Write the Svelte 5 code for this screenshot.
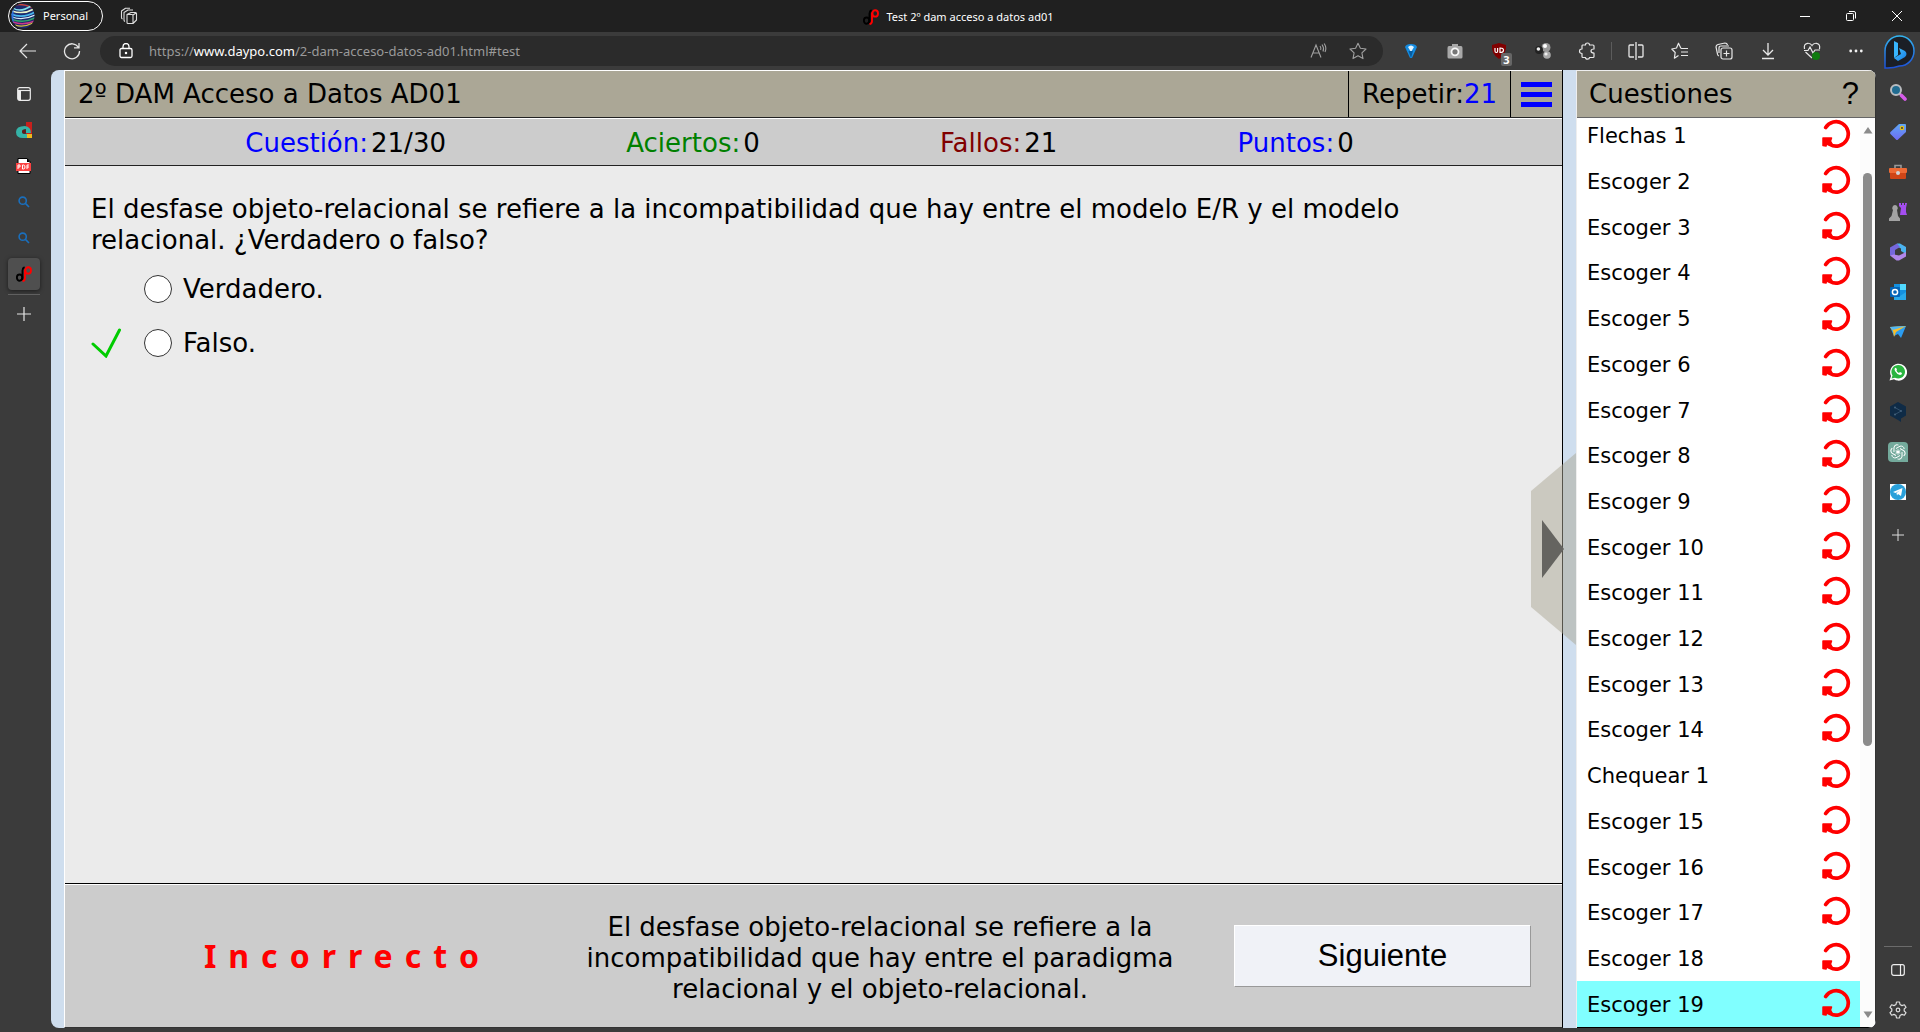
<script>
  const questions = [
    'Flechas 1',
    ...Array.from({ length: 13 }, (_, i) => `Escoger ${i + 2}`),
    'Chequear 1',
    ...Array.from({ length: 5 }, (_, i) => `Escoger ${i + 15}`)
  ];
  const stats = [
    { label: 'Cuestión:', value: '21/30', tone: 'blue' },
    { label: 'Aciertos:', value: '0', tone: 'green' },
    { label: 'Fallos:', value: '21', tone: 'maroon' },
    { label: 'Puntos:', value: '0', tone: 'blue' }
  ];
</script>

{#snippet daypo()}
  <svg width="16" height="16" viewBox="0 0 16 16" fill="none" stroke-width="1.9">
    <ellipse cx="3.600" cy="11.600" rx="2.700" ry="3.100" stroke="#000" />
    <path d="M6.500 14.500V4.500Q6.600 2 8.600 1.200" stroke="#000" />
    <ellipse cx="12.200" cy="4.400" rx="2.800" ry="3.200" stroke="#f00" />
    <path d="M9 3.500V12Q9 14.600 6.500 15.200" stroke="#f00" />
  </svg>
{/snippet}

{#snippet lens()}
  <svg width="12" height="12" viewBox="0 0 12 12" fill="none" stroke="#1a6fbd" stroke-width="1.6"><circle cx="4.7" cy="4.7" r="3.6" /><path d="M7.4 7.4L11 11" /></svg>
{/snippet}

<div class="browser">
  <header class="titlebar">
    <button class="profile">
      <svg width="24" height="26" viewBox="0 0 24 26">
        <defs><clipPath id="face"><ellipse cx="12" cy="13" rx="11.5" ry="12.500" /></clipPath></defs>
        <g clip-path="url(#face)" fill="none">
          <rect width="24" height="26" fill="#1c2a6c" />
          <path d="M3 2Q12 0 22 5" stroke="#c8453a" stroke-width="1.500" />
          <path d="M2 5Q9 10 20 3" stroke="#7fe0e8" stroke-width="1.500" />
          <path d="M1 8Q12 12 23 6" stroke="#e9f3c9" stroke-width="1.500" />
          <path d="M0 11Q12 16 24 9" stroke="#49b8ee" stroke-width="1.800" />
          <path d="M1 14Q12 18 24 12" stroke="#d9eefa" stroke-width="1.300" />
          <path d="M0 16Q12 21 24 15" stroke="#2fa46b" stroke-width="1.500" />
          <path d="M2 19Q12 23 24 18" stroke="#c9378a" stroke-width="1.500" />
          <path d="M4 22Q12 25 22 20" stroke="#d8c13c" stroke-width="1.300" />
          <path d="M1 4V20" stroke="#2f73e0" stroke-width="3" />
        </g>
      </svg>
      <span>Personal</span>
    </button>
    <button class="icon" aria-label="Espacios de trabajo">
      <svg width="18" height="18" viewBox="0 0 18 18" fill="none" stroke="#ddd" stroke-width="1.1" stroke-linejoin="round"><path d="M7 7.5L11 5.5H15.5Q16.500 5.500 16.500 6.500V13L13 16.500H8Q7 16.500 7 15.500ZM7 7.500H12Q13 7.500 13 8.500V16M13 8L16 6" /><path d="M5 14.500Q4 14 4 13V5.500L8 3H13M2.500 12Q1.500 11.500 1.500 10.500V4L5.500 1.200H10" /></svg>
    </button>
    <h1 class="tab-title">{@render daypo()}<span>Test 2º dam acceso a datos ad01</span></h1>
    <div class="window-buttons">
      <button aria-label="Minimizar"><svg width="10" height="10" viewBox="0 0 10 10" stroke="#fff"><path d="M0 5.500H10" /></svg></button>
      <button aria-label="Restaurar"><svg width="10" height="10" viewBox="0 0 10 10" stroke="#fff" fill="none"><rect x=".5" y="2.500" width="7" height="7" rx="1" /><path d="M3 .500H8Q9.500 .500 9.500 2V7.500" /></svg></button>
      <button aria-label="Cerrar"><svg width="10" height="10" viewBox="0 0 10 10" stroke="#fff"><path d="M0 0L10 10M10 0L0 10" /></svg></button>
    </div>
  </header>

  <nav class="toolbar" aria-label="Navegación">
    <button class="slot" aria-label="Atrás"><svg width="18" height="16" viewBox="0 0 18 16" fill="none" stroke="#e6e6e6" stroke-width="1.2"><path d="M8 1L1 8L8 15M1 8H17" /></svg></button>
    <button class="slot" aria-label="Actualizar"><svg width="18" height="18" viewBox="0 0 18 18" fill="none" stroke="#e6e6e6" stroke-width="1.3"><path d="M15.500 5.500A7.500 7.500 0 1 0 16.500 9M16 1V5.800H11" /></svg></button>
    <div class="address">
      <svg width="14" height="16" viewBox="0 0 14 16" fill="none" stroke="#fff" stroke-width="1.3"><rect x="1" y="5.500" width="12" height="9" rx="1.500" /><path d="M4 5.500V3.500A3 3 0 0 1 10 3.500V5.500" /><circle cx="7" cy="10" r=".6" fill="#fff" /></svg>
      <a href="#test">https://<b>www.daypo.com</b>/2-dam-acceso-datos-ad01.html#test</a>
      <button class="slot aside" aria-label="Leer en voz alta"><svg width="18" height="16" viewBox="0 0 18 16" fill="none" stroke="#a0a0a0" stroke-width="1.1"><path d="M1 14.500L6 2L11 14.500M3 10H9M10 3Q11.500 5 10.600 7M12 1.500Q14.500 5 13 8.500M14.200 .500Q17 5 15 9" /></svg></button>
      <button class="slot" aria-label="Favorito"><svg width="18" height="18" viewBox="0 0 18 18" fill="none" stroke="#a0a0a0" stroke-width="1.1" stroke-linejoin="round"><path d="M9 1.200L11.400 6.300L17 7L12.900 10.900L14 16.600L9 13.800L4 16.600L5.100 10.900L1 7L6.600 6.300Z" /></svg></button>
    </div>
    <div class="extensions">
      <button class="slot" aria-label="Gema"><svg width="14" height="16" viewBox="0 0 14 16"><path d="M1 4Q2 1 7 1T13 4L8 15H6Z" fill="#148be0" /><path d="M4 4Q7 1 10 4L7 9Z" fill="#dff3ff" /><path d="M4.500 8L7 15L9 8Z" fill="#075c9f" /></svg></button>
      <button class="slot" aria-label="Captura"><svg width="16" height="16" viewBox="0 0 16 16"><path d="M5 3V1H11V3H14Q15.500 3 15.500 5V14Q15.500 15.500 14 15.500H2Q.500 15.500 .500 14V5Q.500 3 2 3Z" fill="#a9a9a9" /><circle cx="8" cy="8.800" r="3.500" fill="#777" stroke="#f7f7f7" stroke-width="1.800" /></svg></button>
      <button class="slot badge-host" aria-label="uBlock"><svg width="16" height="16" viewBox="0 0 16 16"><path d="M8 0L15 2Q16 11 8 16Q0 11 1 2Z" fill="#800000" /><path d="M4 5V8Q4 9.500 5.300 9.500T6.600 8V5M9 5V9.500Q12.500 9.500 12.500 7.200T9 5Z" fill="none" stroke="#fff" stroke-width="1.200" /></svg><span class="badge">3</span></button>
      <button class="slot" aria-label="Esferas"><svg width="16" height="16" viewBox="0 0 16 16"><circle cx="11" cy="4.500" r="4.500" fill="#999" /><circle cx="10" cy="3" r="2" fill="#fff" /><circle cx="12" cy="12" r="3.800" fill="#aaa" /><circle cx="11" cy="11" r="1.600" fill="#eee" /><circle cx="4" cy="7" r="4" fill="#222" /><circle cx="3.400" cy="6" r="1.800" fill="#eee" /></svg></button>
      <button class="slot" aria-label="Extensiones"><svg width="18" height="18" viewBox="0 0 18 18" fill="none" stroke="#e8e8e8" stroke-width="1.200" stroke-linejoin="round"><path d="M4.500 3H7.500Q7.500 1 9.500 1T11.500 3H15Q16 3 16 4V7Q13 7 13 9T16 11.200V14.500Q16 15.500 15 15.500H11.500Q11.500 17.200 9.500 17.200T7.500 15.500H5Q4 15.500 4 14.500V11.500Q1.500 11.500 1.500 9.200T4 7V4Q4 3 4.500 3Z" /></svg></button>
      <i class="divider"></i>
      <button class="slot" aria-label="Pantalla dividida"><svg width="16" height="18" viewBox="0 0 16 18" fill="none" stroke="#e8e8e8" stroke-width="1.300"><path d="M6 3H2Q1 3 1 4V14Q1 15 2 15H6M10 3H14Q15 3 15 4V14Q15 15 14 15H10M8 0V18" /></svg></button>
      <button class="slot" aria-label="Favoritos"><svg width="18" height="18" viewBox="0 0 18 18" fill="none" stroke="#e8e8e8" stroke-width="1.200" stroke-linejoin="round"><path d="M10 6.500L7.500 1.200L5.500 6L.800 7L4.200 10.500L3.400 16.200L7.500 13.500M10 6.500H17M10 10H17M10 13.500H17" /></svg></button>
      <button class="slot" aria-label="Colecciones"><svg width="18" height="18" viewBox="0 0 18 18" fill="none" stroke="#e8e8e8" stroke-width="1.200"><rect x="6" y="6" width="11" height="11" rx="2" /><path d="M11.500 8.500V14.500M8.500 11.500H14.500M4 14Q2.500 13.500 2.500 12L1 5Q1 3 3 2.500L10 1Q12 1 12.500 3M4 11V6Q4 4 6 4H14" /></svg></button>
      <button class="slot" aria-label="Descargas"><svg width="14" height="18" viewBox="0 0 14 18" fill="none" stroke="#e8e8e8" stroke-width="1.300"><path d="M7 1V13M2 8L7 13L12 8M1 16.500H13" /></svg></button>
      <button class="slot" aria-label="Rendimiento"><svg width="18" height="18" viewBox="0 0 18 18" fill="none" stroke="#e8e8e8" stroke-width="1.200"><path d="M1.500 7Q.500 2 4.500 1.300Q7.500 1 9 3.500Q10.500 1 13.500 1.300Q17.500 2 16.500 7M2.500 10L9 16M1 8.500H5L7 5L10 11L12 8H17" /><circle cx="13" cy="14" r="4" fill="#0f7b0f" stroke="none" /></svg></button>
      <button class="slot" aria-label="Más"><svg width="14" height="4" viewBox="0 0 14 4" fill="#f2f2f2"><circle cx="1.700" cy="2" r="1.400" /><circle cx="7" cy="2" r="1.400" /><circle cx="12.300" cy="2" r="1.400" /></svg></button>
      <button class="bing" aria-label="Bing"><svg width="32" height="38" viewBox="0 0 32 38"><defs><linearGradient id="ring" x2="0" y2="1"><stop stop-color="#33b5f0" /><stop offset="1" stop-color="#1c50d8" /></linearGradient><linearGradient id="bee" x2="1" y2="1"><stop stop-color="#48c8ff" /><stop offset="1" stop-color="#157be5" /></linearGradient></defs><path d="M2 36V19A14.500 15 0 1 1 16.500 34Q10 36.500 2 36Z" fill="#1b1f26" stroke="url(#ring)" stroke-width="1.500" /><path d="M11 9L15 11V23L11 26Z" fill="#38b6ff" /><path d="M16 16L22 19Q25 22 22 25L15 29L11 26L18 22Z" fill="url(#bee)" /></svg></button>
    </div>
  </nav>

  <div class="body">
    <aside class="tabs" aria-label="Pestañas">
      <button aria-label="Panel de pestañas"><svg width="14" height="14" viewBox="0 0 14 14" fill="none" stroke="#ececec" stroke-width="1.200"><rect x=".7" y=".7" width="12.600" height="12.600" rx="2" /><path d="M1 3.500H13" /><path d="M2.500 3.500V13" stroke-width="3" /></svg></button>
      <button aria-label="Pestaña 1"><svg width="16" height="16" viewBox="0 0 16 16"><path d="M10 0H16V12H10Z" fill="#c8201c" /><path d="M11 12H16V16H11Z" fill="#f0b81c" /><path d="M9 4Q0 4 0 10T7 16H11V12H8Q6 12 6 10T9 7Z" fill="#35b3a7" /><path d="M9 4Q15 5 15 11H10V7H9Z" fill="#35b3a7" /><circle cx="8" cy="9.500" r="2" fill="#621818" /></svg></button>
      <button aria-label="Pestaña 2"><svg width="16" height="16" viewBox="0 0 16 16"><path d="M2 .500H11L14 3.500V15.500H2Z" fill="#fff" stroke="#000" /><path d="M11 0V4H14" fill="#000" /><rect y="5" width="15" height="8" fill="#fb4141" /><path d="M2 11V7H4V9H2M6.500 7V11H7.500Q9 11 9 9T7.500 7ZM11 11V7H13M11 9H13" fill="none" stroke="#fff" /></svg></button>
      <button aria-label="Búsqueda 1">{@render lens()}</button>
      <button aria-label="Búsqueda 2">{@render lens()}</button>
      <button class="active" aria-label="Test 2º dam">{@render daypo()}</button>
      <i class="rule"></i>
      <button aria-label="Nueva pestaña"><svg width="14" height="14" viewBox="0 0 14 14" stroke="#e6e6e6" stroke-width="1.200"><path d="M7 0V14M0 7H14" /></svg></button>
    </aside>

    <div class="page">
      <main class="test">
        <div class="test-head">
          <h2>2º DAM Acceso a Datos AD01</h2>
          <button class="repeat">Repetir:<span class="blue">21</span></button>
          <button class="menu" aria-label="Menú"><i></i><i></i><i></i></button>
        </div>
        <div class="stats">
          {#each stats as s}
            <p><span class={s.tone}>{s.label}</span><span>{s.value}</span></p>
          {/each}
        </div>
        <section class="question">
          <p>El desfase objeto-relacional se refiere a la incompatibilidad que hay entre el modelo E/R y el modelo relacional. ¿Verdadero o falso?</p>
          <label class="option"><span class="mark"></span><input type="radio" name="answer" /><span>Verdadero.</span></label>
          <label class="option"><span class="mark"><svg width="30" height="30" viewBox="0 0 30 30" fill="none" stroke="#0c0" stroke-width="3" stroke-linecap="round"><path d="M2 16L15 28L28.500 2" /></svg></span><input type="radio" name="answer" /><span>Falso.</span></label>
        </section>
        <footer class="result">
          <strong>Incorrecto</strong>
          <p>El desfase objeto-relacional se refiere a la incompatibilidad que hay entre el paradigma relacional y el objeto-relacional.</p>
          <button>Siguiente</button>
        </footer>
      </main>

      <button class="collapse" aria-label="Ocultar cuestiones">
        <svg width="45" height="192" viewBox="0 0 45 192"><path d="M0 38L45 0V192L0 154Z" fill="#aba796" fill-opacity=".5" /><path d="M11 67L33 96L11 125Z" fill="#656460" /></svg>
      </button>

      <section class="panel">
        <div class="panel-head"><h2>Cuestiones</h2><button aria-label="Ayuda">?</button></div>
        <div class="list">
          <ul>
            {#each questions as q, i}
              <li class:current={i === questions.length - 1}>
                <span>{q}</span>
                <button aria-label={`Repetir ${q}`}><svg width="30" height="30" viewBox="0 0 30 30"><path d="M4.700 8.500A12.200 12.200 0 1 1 9 25.500" fill="none" stroke="#f00" stroke-width="3.700" stroke-linecap="round" /><path d="M2 19H10.500L9.500 22L11 25L8.500 26L5.500 25L5 27L2 26.500Z" fill="#f00" stroke="#f00" stroke-width="1.500" stroke-linejoin="round" /></svg></button>
              </li>
            {/each}
          </ul>
          <div class="scroll">
            <svg width="10" height="8" viewBox="0 0 10 8"><path d="M5 1L9.500 7.500H.500Z" fill="#8b8b8b" /></svg>
            <i class="before"></i><i class="thumb"></i><i class="after"></i>
            <svg width="10" height="8" viewBox="0 0 10 8"><path d="M5 7L9.500 .500H.500Z" fill="#8b8b8b" /></svg>
          </div>
        </div>
      </section>
    </div>

    <aside class="side" aria-label="Barra lateral">
      <button aria-label="Buscar"><svg width="18" height="18" viewBox="0 0 18 18"><path d="M10.500 10.500L16 16" stroke="#b9b9b9" stroke-width="2" /><path d="M12.500 12.500L16 16" stroke="#d65bea" stroke-width="3.600" stroke-linecap="round" /><circle cx="7" cy="7" r="5" fill="#216c91" stroke="#b9bcc0" stroke-width="2" /></svg></button>
      <button aria-label="Compras"><svg width="18" height="18" viewBox="0 0 18 18"><defs><linearGradient id="tag" x2="0" y2="1"><stop stop-color="#5ea7f5" /><stop offset="1" stop-color="#6f6bf2" /></linearGradient></defs><path d="M10 1L16 1Q17 1 17 2V9L9 16.500Q8 17.500 7 16.500L1.500 11Q.500 10 1.500 9Z" fill="url(#tag)" /><circle cx="13" cy="5" r="1.700" fill="#444" stroke="#e8c414" stroke-width="1.200" /></svg></button>
      <button aria-label="Herramientas"><svg width="18" height="16" viewBox="0 0 18 16"><path d="M6 4V1.500H12V4" fill="none" stroke="#999" stroke-width="1.600" /><rect y="4" width="18" height="5" rx="1" fill="#ee6a35" /><path d="M1 9H17V14Q17 15 16 15H2Q1 15 1 14Z" fill="#cf4517" /><circle cx="9" cy="9" r="2" fill="#d0d4d8" /></svg></button>
      <button aria-label="Juegos"><svg width="18" height="18" viewBox="0 0 18 18"><path d="M10 0H12V2H13V0H15V2H16V0H18L17 5V9L18 12H11L12 5L10 3Z" fill="#a44ef0" /><path d="M6 2A3 3 0 0 1 8 7L9 13L11 15.500V18H0V15.500L2.500 13L4 7A3 3 0 0 1 6 2" fill="#a3a3a3" /></svg></button>
      <button aria-label="Microsoft 365"><svg width="18" height="18" viewBox="0 0 18 18"><path d="M8 .500H11L17 4V11L12 8V5.500L8 3.500Z" fill="#4bb3ef" /><path d="M8 .500L1 4.500V12.500L6 14V7L11 4Z" fill="#7567dc" /><path d="M1 12.500L5 11.500L10 12.500L17 9V13.500L10 17.500H7.500Z" fill="#b087ea" /></svg></button>
      <button aria-label="Outlook"><svg width="18" height="18" viewBox="0 0 18 18"><rect x="5" y="1" width="12" height="14" fill="#1490df" /><path d="M11 1H17V7H11Z" fill="#50d9ff" /><path d="M5 9L11 13L17 9V17H5Z" fill="#28a8ea" /><rect x="1" y="4" width="10" height="10" rx="1" fill="#0364b8" /><circle cx="6" cy="9" r="2.600" fill="none" stroke="#fff" stroke-width="1.500" /></svg></button>
      <button aria-label="Drop"><svg width="18" height="16" viewBox="0 0 18 16"><path d="M1 3L17 2L12 14L9 10L5 12Z" fill="#2b9df1" /><path d="M1 3L17 2L7 8L5 13L4 7Z" fill="#f7bd2b" /><path d="M1 3L17 2L4 6Z" fill="#4fb8f9" /></svg></button>
      <button aria-label="WhatsApp"><svg width="18" height="18" viewBox="0 0 18 18"><path d="M.500 17.500L2 13A8.500 8.500 0 1 1 5 16.300Z" fill="#fff" /><path d="M2.500 15.500L3.500 12.500A6.800 6.800 0 1 1 6 14.800Z" fill="#2ab540" /><path d="M6 5Q5 6 6 8Q8 11.500 11 12Q13 12 13 10L11 9L10 10Q8 9 7.500 7.500L8 6.500L7 4.700Z" fill="#fff" /></svg></button>
      <button aria-label="DeepL"><svg width="18" height="20" viewBox="0 0 18 20"><path d="M9 0L17 4.500V13.500L12 16.500V20L9 18L1 13.500V4.500Z" fill="#0f2b46" /><path d="M6 5.500L12 9L6 12.500" stroke="#33516c" fill="none" /><circle cx="6" cy="5.500" r="1" fill="#45627c" /><circle cx="12" cy="9" r="1" fill="#45627c" /><circle cx="6" cy="12.500" r="1" fill="#45627c" /></svg></button>
      <button aria-label="ChatGPT"><svg width="20" height="20" viewBox="0 0 20 20"><path d="M4 0H16Q20 0 20 4V20H4Q0 20 0 16V4Q0 0 4 0" fill="#74aa9c" /><g fill="none" stroke="#fff" stroke-width="1">{#each [0, 60, 120, 180, 240, 300] as a}<path d="M10 7.300V11M8 6.500L12 4.200Q15.500 3.500 16.200 7" transform={`rotate(${a} 10 10)`} />{/each}</g></svg></button>
      <button aria-label="Telegram"><svg width="16" height="16" viewBox="0 0 16 16"><rect width="16" height="16" fill="#fff" /><circle cx="8" cy="8" r="8" fill="#29a0da" /><path d="M3 8L12.500 4L11 12L8 10L7 11.500L6.500 9L10 6.500L5.500 9Z" fill="#fff" /></svg></button>
      <button class="add" aria-label="Añadir"><svg width="12" height="12" viewBox="0 0 12 12" stroke="#ddd"><path d="M6 0V12M0 6H12" /></svg></button>
      <i class="side-rule"></i>
      <button aria-label="Ocultar barra"><svg width="14" height="12" viewBox="0 0 14 12" fill="none" stroke="#eee" stroke-width="1.200"><rect x=".7" y=".7" width="12.600" height="10.600" rx="2" /><path d="M9.500 1V11" /></svg></button>
      <button aria-label="Configuración"><svg width="18" height="18" viewBox="0 0 18 18" fill="none" stroke="#ddd" stroke-width="1.200" stroke-linejoin="round"><path d="M7.500 1H10.500L11 3.500L13 4.600L15.400 3.800L17 6.400L15.200 8V10L17 11.600L15.400 14.200L13 13.400L11 14.500L10.500 17H7.500L7 14.500L5 13.400L2.600 14.200L1 11.600L2.800 10V8L1 6.400L2.600 3.800L5 4.600L7 3.500Z" /><circle cx="9" cy="9" r="1.800" /></svg></button>
    </aside>
  </div>
</div>

<style>
  :global(body) { margin: 0; }
  * { box-sizing: border-box; }
  button { padding: 0; border: 0; background: none; color: inherit; font: inherit; cursor: pointer; }
  h1, h2, p, ul { margin: 0; padding: 0; font-weight: 400; }
  svg { display: block; flex: none; }
  .browser { display: flex; flex-direction: column; height: 100vh; background: #3b3b3b; color: #fff; font: 11px/16px "Noto Sans", sans-serif; }
  .titlebar { display: grid; grid-template-columns: auto auto 1fr auto; align-items: center; height: 32px; flex: none; padding-left: 8px; background: #202020; }
  .profile { display: flex; align-items: center; gap: 8px; width: 95px; height: 30px; padding-left: 2px; border: 1px solid #fff; border-radius: 15px; }
  .icon { margin-left: 17px; }
  .tab-title { display: flex; align-items: center; justify-content: center; gap: 8px; padding: 1px 4px 0 0; font-size: 11px; line-height: 16px; }
  .window-buttons { display: flex; }
  .window-buttons button { display: grid; place-items: center; width: 46px; height: 32px; }

  .toolbar { display: flex; align-items: center; height: 38px; flex: none; padding-left: 6px; }
  .slot { display: grid; place-items: center; width: 44px; height: 30px; flex: none; }
  .address { display: flex; flex: 1; align-items: center; height: 30px; margin-left: 6px; padding: 0 3px 0 19px; border-radius: 15px; background: #2b2b2b; }
  .address a { margin-left: 16px; color: #9a9a9a; font-size: 13px; text-decoration: none; }
  .address b { color: #fff; font-weight: 400; }
  .aside { width: 34px; margin-left: auto; }
  .extensions { display: flex; align-items: center; padding-left: 6px; }
  .divider { width: 1px; height: 18px; margin: 0 2px; background: #5c5c5c; }
  .badge-host { position: relative; }
  .badge { position: absolute; left: 24px; top: 17px; width: 11px; height: 13px; border-radius: 2px; background: #666; font: bold 11px/13px "Noto Sans", sans-serif; text-align: center; }
  .bing { display: grid; place-items: center; width: 42px; }

  .body { display: flex; flex: 1; min-height: 0; }
  .tabs { display: flex; flex-direction: column; align-items: center; width: 51px; flex: none; padding: 8px 4px 0 0; }
  .tabs button { display: grid; place-items: center; width: 32px; height: 32px; margin-bottom: 4px; flex: none; }
  .tabs .active { border-radius: 4px; background: #4f4f4f; box-shadow: 0 1px 4px #0008; }
  .rule { width: 32px; height: 1px; margin-bottom: 3px; background: #606060; }

  .page { position: relative; display: flex; flex: 1; min-width: 0; margin-bottom: 4px; overflow: hidden; padding-left: 13px; border-radius: 8px; background: #cfdeee; color: #000; font: 26px/31px "DejaVu Sans", sans-serif; }
  .test { display: flex; flex: 1; flex-direction: column; min-width: 0; border-left: 1px solid #fff; border-right: 1px solid #000; border-bottom: 1px solid #333; }
  .test-head { display: flex; height: 48px; flex: none; border-top: 1px solid #fff; border-bottom: 1px solid #222; background: #aba796; }
  .test-head h2 { flex: 1; padding: 8px 0 0 13px; font-size: 26px; }
  .repeat { padding: 0 13px; border-left: 1px solid #000; border-right: 1px solid #000; }
  .menu { display: flex; flex-direction: column; align-items: center; justify-content: center; gap: 5px; width: 51px; }
  .menu i { width: 31px; height: 5px; background: #00f; }
  .blue { color: #00f; }
  .green { color: #008000; }
  .maroon { color: #800000; }
  .stats { display: flex; align-items: center; justify-content: space-evenly; height: 48px; flex: none; padding: 2px 28px 0 0; border-top: 1px solid #fff; border-bottom: 1px solid #222; background: #ccc; }
  .stats p { display: flex; gap: 3px; }
  .question { flex: 1; padding: 28px 26px 0; background: #ebebeb; }
  .question p { margin-bottom: 6px; }
  .option { display: flex; align-items: center; width: max-content; height: 54px; }
  .mark { width: 53px; }
  .option input { width: 28px; height: 28px; margin: 0 11px 0 0; border: 1px solid #333; border-radius: 50%; background: #fff; appearance: none; }
  .result { display: grid; grid-template-columns: 513fr 604fr 380fr; align-items: center; height: 144px; flex: none; border-top: 1px solid #000; background: #ccc; box-shadow: inset 0 1px #fff; text-align: center; }
  .result strong { padding-left: 52px; color: #f00; font: bold 32px/40px "Noto Sans", sans-serif; letter-spacing: 12px; }
  .result p { padding: 6px 8px 0; }
  .result button { width: 297px; height: 62px; margin-left: 52px; border: 1px solid; border-color: #fff #999 #999 #fff; background: #f0f2f7; font: 31px/36px "Liberation Sans", sans-serif; }

  .collapse { position: absolute; top: 50%; right: 300px; z-index: 1; height: 192px; margin-top: -96px; }

  .panel { display: flex; flex-direction: column; width: 300px; flex: none; margin-left: 13px; border-left: 1px solid #eee; border-right: 1px solid #333; background: #fff; }
  .panel-head { display: flex; align-items: center; justify-content: space-between; height: 48px; flex: none; padding: 0 16px 0 12px; border-top: 1px solid #eee; border-bottom: 1px solid #666; background: #aba796; }
  .panel-head h2 { font-size: 26px; }
  .panel-head button { font: 31px/36px "Liberation Sans", sans-serif; }
  .list { display: flex; flex: 1; min-height: 0; overflow: hidden; border-bottom: 1px solid #000; }
  .list ul { display: flex; flex: 1; flex-direction: column; margin-top: -5px; list-style: none; font-size: 21px; line-height: 26px; }
  .list li { display: flex; flex: 1; align-items: center; justify-content: space-between; min-height: 0; padding: 1px 9px 0 10px; }
  .list .current { background: #80ffff; }
  .list li button { margin-bottom: 4px; }
  .scroll { display: flex; flex-direction: column; align-items: center; width: 15px; flex: none; padding: 8px 0; background: #fcfcfc; }
  .before { flex: 39; }
  .thumb { width: 9px; flex: 572; border-radius: 5px; background: #8b8b8b; }
  .after { flex: 265; }

  .side { display: flex; flex-direction: column; align-items: center; width: 44px; flex: none; padding: 2px 0; }
  .side button { display: grid; place-items: center; width: 40px; height: 40px; flex: none; }
  .side .add { margin-top: 3px; }
  .side-rule { width: 28px; height: 1px; margin: auto 0 3px; background: #6b6b6b; }
</style>
